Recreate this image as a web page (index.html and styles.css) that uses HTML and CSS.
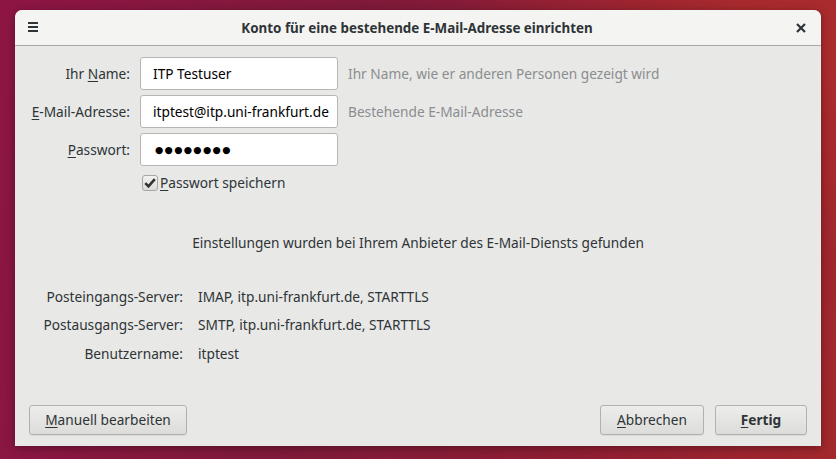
FILE: index.html
```html
<!DOCTYPE html>
<html lang="de">
<head>
<meta charset="utf-8">
<title>Konto für eine bestehende E-Mail-Adresse einrichten</title>
<link rel="stylesheet" href="styles.css">
</head>
<body>
<div class="window">
  <header class="headerbar">
    <span class="menu-btn" aria-label="Menü">
      <svg width="10" height="10" viewBox="0 0 10 10"><rect x="0" y="0" width="10" height="2" fill="#2e3436"/><rect x="0" y="4" width="10" height="2" fill="#2e3436"/><rect x="0" y="8" width="10" height="2" fill="#2e3436"/></svg>
    </span>
    <h1 class="title">Konto für eine bestehende E-Mail-Adresse einrichten</h1>
    <span class="close-btn" aria-label="Schließen">
      <svg width="10" height="10" viewBox="0 0 10 10"><path d="M1 1 L9 9 M9 1 L1 9" stroke="#2e3436" stroke-width="2.2" stroke-linecap="butt"/></svg>
    </span>
  </header>
  <main class="content">
    <div class="form">
      <label class="label">Ihr <u>N</u>ame:</label>
      <div class="entry">ITP Testuser</div>
      <span class="hint">Ihr Name, wie er anderen Personen gezeigt wird</span>

      <label class="label"><u>E</u>-Mail-Adresse:</label>
      <div class="entry">itptest@itp.uni-frankfurt.de</div>
      <span class="hint">Bestehende E-Mail-Adresse</span>

      <label class="label"><u>P</u>asswort:</label>
      <div class="entry password">●●●●●●●●</div>
      <span></span>

      <span></span>
      <div class="check-row">
        <span class="checkbox">
          <svg width="12" height="12" viewBox="0 0 12 12"><path d="M1.3 6.2 L4.5 9.4 L10.8 2.2" fill="none" stroke="#2e3436" stroke-width="2.6"/></svg>
        </span>
        <span class="check-label"><u>P</u>asswort speichern</span>
      </div>
      <span></span>
    </div>

    <p class="status">Einstellungen wurden bei Ihrem Anbieter des E-Mail-Diensts gefunden</p>

    <div class="servers">
      <span class="slabel">Posteingangs-Server:</span>
      <span class="svalue">IMAP, itp.uni-frankfurt.de, STARTTLS</span>
      <span class="slabel">Postausgangs-Server:</span>
      <span class="svalue">SMTP, itp.uni-frankfurt.de, STARTTLS</span>
      <span class="slabel">Benutzername:</span>
      <span class="svalue">itptest</span>
    </div>

    <div class="actions">
      <button class="btn btn-manual"><u>M</u>anuell bearbeiten</button>
      <div class="right-actions">
        <button class="btn btn-cancel"><u>A</u>bbrechen</button>
        <button class="btn btn-done"><u>F</u>ertig</button>
      </div>
    </div>
  </main>
</div>
</body>
</html>
```
FILE: styles.css
```css
html, body {
  margin: 0;
  padding: 0;
}
body {
  width: 836px;
  height: 459px;
  overflow: hidden;
  background:
    radial-gradient(ellipse 500px 300px at 95% 10%, rgba(175, 45, 45, 0.9), rgba(175, 45, 45, 0) 70%),
    linear-gradient(100deg, #8d1544 0%, #7f1a3a 40%, #8e1e33 70%, #a3282d 100%);
  font-family: "Noto Sans", "Open Sans", "DejaVu Sans", sans-serif;
  font-size: 13.7px;
  color: #2e3436;
  padding-top: 10px;
  padding-left: 15px;
  box-sizing: border-box;
}
u {
  text-decoration: underline;
  text-underline-offset: 2px;
  text-decoration-thickness: 1px;
}
.window {
  width: 806px;
  height: 436px;
  background: #e8e8e7;
  border-radius: 7px 7px 0 0;
  box-shadow: 0 2px 8px rgba(0, 0, 0, 0.35);
  display: flex;
  flex-direction: column;
  overflow: hidden;
}
.headerbar {
  height: 35px;
  flex: none;
  background: #f4f4f3;
  border-bottom: 1px solid #a8a8a6;
  display: flex;
  align-items: center;
  padding: 0 13px 0 13px;
  border-radius: 7px 7px 0 0;
}
.menu-btn, .close-btn {
  width: 10px;
  height: 10px;
  display: flex;
  flex: none;
}
.menu-btn { margin-top: -1px; }
.close-btn { margin-right: 2px; }
.title {
  flex: 1;
  margin: 0;
  text-align: center;
  font-size: 13.4px;
  font-weight: bold;
  color: #2e3436;
  line-height: 20px;
}
.content {
  flex: 1;
  display: flex;
  flex-direction: column;
  padding: 11px 14px 11px 14px;
}
.form {
  display: grid;
  grid-template-columns: 101px 198px auto;
  column-gap: 10px;
  row-gap: 5px;
  align-items: center;
}
.label {
  text-align: right;
  color: #2e3436;
}
.entry {
  height: 33px;
  box-sizing: border-box;
  background: #ffffff;
  border: 1px solid #b6b6b3;
  border-radius: 3px;
  padding: 0 10px 0 12px;
  display: flex;
  align-items: center;
  white-space: nowrap;
  overflow: hidden;
  color: #000;
}
.entry.password {
  font-size: 9.5px;
  letter-spacing: 1.3px;
  padding-left: 14px;
}
.hint {
  color: #8b8e8f;
  white-space: nowrap;
}
.check-row {
  display: flex;
  align-items: center;
  margin-top: 2px;
  padding-left: 2px;
}
.checkbox {
  width: 16px;
  height: 16px;
  box-sizing: border-box;
  border: 1px solid #a7a7a4;
  border-radius: 3px;
  background: linear-gradient(#f2f2f1, #dcdcda);
  display: flex;
  align-items: center;
  justify-content: center;
  margin-right: 2px;
}
.status {
  margin: 41px 0 0 0;
  text-align: center;
  line-height: 20px;
}
.servers {
  margin-top: 34px;
  display: grid;
  grid-template-columns: 154px auto;
  column-gap: 15px;
  row-gap: 8.3px;
  line-height: 20px;
}
.slabel {
  text-align: right;
}
.actions {
  margin-top: auto;
  display: flex;
  justify-content: space-between;
  align-items: center;
}
.right-actions {
  display: flex;
  gap: 11px;
}
.btn {
  height: 30px;
  box-sizing: border-box;
  font-family: inherit;
  font-size: 13.7px;
  color: #2e3436;
  border: 1px solid #b1b1ae;
  border-radius: 3px;
  background: linear-gradient(#ededec, #dcdcdb);
  box-shadow: 0 1px 0 rgba(0,0,0,0.06);
  padding: 0 4px;
  line-height: 20px;
  white-space: nowrap;
}
.btn-manual { width: 158px; }
.btn-cancel { width: 104px; }
.btn-done { width: 92px; font-weight: bold; }
```
